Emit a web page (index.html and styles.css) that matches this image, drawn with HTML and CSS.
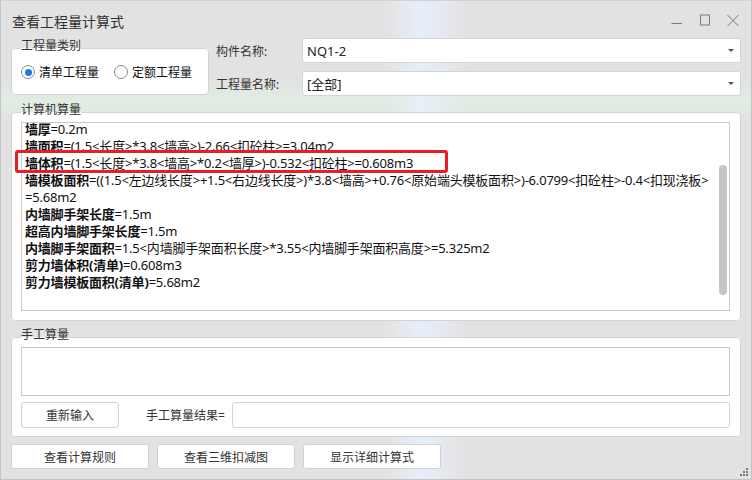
FILE: index.html
```html
<!DOCTYPE html>
<html lang="zh-CN">
<head>
  <meta charset="UTF-8">
  <title>查看工程量计算式</title>
  <link rel="stylesheet" href="styles.css">
</head>
<body>
  <div class="window">
    <div class="titlebar">
      <span class="title">查看工程量计算式</span>
      <div class="controls">
        <span class="ctl">
          <svg width="12" height="12" viewBox="0 0 12 12"><line x1="0.5" y1="9.5" x2="11" y2="9.5" stroke="#7a7a7a" stroke-width="1"/></svg>
        </span>
        <span class="ctl">
          <svg width="12" height="12" viewBox="0 0 12 12"><rect x="1.5" y="1" width="9" height="10" fill="none" stroke="#7a7a7a" stroke-width="1"/></svg>
        </span>
        <span class="ctl">
          <svg width="12" height="12" viewBox="0 0 12 12"><path d="M0.5 1 L11.5 12 M11.5 1 L0.5 12" stroke="#7a7a7a" stroke-width="1" fill="none"/></svg>
        </span>
      </div>
    </div>

    <div class="top">
      <fieldset class="group type-group">
        <legend>工程量类别</legend>
        <div class="radios">
          <label class="radio-item"><span class="radio checked"></span>清单工程量</label>
          <label class="radio-item"><span class="radio"></span>定额工程量</label>
        </div>
      </fieldset>

      <div class="fields">
        <div class="field-row">
          <span class="field-label">构件名称:</span>
          <div class="combo"><span>NQ1-2</span><span class="arrow"></span></div>
        </div>
        <div class="field-row">
          <span class="field-label">工程量名称:</span>
          <div class="combo"><span>[全部]</span><span class="arrow"></span></div>
        </div>
      </div>
    </div>

    <fieldset class="group calc-group">
      <legend>计算机算量</legend>
      <div class="calc-box">
        <div class="calc-lines">
          <div class="line"><b>墙厚</b>=0.2m</div>
          <div class="line"><b>墙面积</b>=(1.5&lt;长度&gt;*3.8&lt;墙高&gt;)-2.66&lt;扣砼柱&gt;=3.04m2</div>
          <div class="line hl"><b>墙体积</b>=(1.5&lt;长度&gt;*3.8&lt;墙高&gt;*0.2&lt;墙厚&gt;)-0.532&lt;扣砼柱&gt;=0.608m3</div>
          <div class="line"><b>墙模板面积</b>=((1.5&lt;左边线长度&gt;+1.5&lt;右边线长度&gt;)*3.8&lt;墙高&gt;+0.76&lt;原始端头模板面积&gt;)-6.0799&lt;扣砼柱&gt;-0.4&lt;扣现浇板&gt;<br>=5.68m2</div>
          <div class="line"><b>内墙脚手架长度</b>=1.5m</div>
          <div class="line"><b>超高内墙脚手架长度</b>=1.5m</div>
          <div class="line"><b>内墙脚手架面积</b>=1.5&lt;内墙脚手架面积长度&gt;*3.55&lt;内墙脚手架面积高度&gt;=5.325m2</div>
          <div class="line"><b>剪力墙体积(清单)</b>=0.608m3</div>
          <div class="line"><b>剪力墙模板面积(清单)</b>=5.68m2</div>
        </div>
        <div class="scroll-track"><div class="scroll-thumb"></div></div>
      </div>
    </fieldset>

    <fieldset class="group manual-group">
      <legend>手工算量</legend>
      <div class="manual-input"></div>
      <div class="manual-row">
        <button class="btn reset-btn">重新输入</button>
        <span class="result-label">手工算量结果=</span>
        <div class="result-box"></div>
      </div>
    </fieldset>

    <div class="bottom-bar">
      <button class="btn bottom-btn">查看计算规则</button>
      <button class="btn bottom-btn">查看三维扣减图</button>
      <button class="btn bottom-btn">显示详细计算式</button>
      <svg class="grip" width="9" height="9" viewBox="0 0 9 9">
        <rect x="6" y="0" width="2" height="2" fill="#7a7a7a"/>
        <rect x="3" y="3" width="2" height="2" fill="#7a7a7a"/>
        <rect x="6" y="3" width="2" height="2" fill="#7a7a7a"/>
        <rect x="0" y="6" width="2" height="2" fill="#7a7a7a"/>
        <rect x="3" y="6" width="2" height="2" fill="#7a7a7a"/>
        <rect x="6" y="6" width="2" height="2" fill="#7a7a7a"/>
      </svg>
    </div>
  </div>
</body>
</html>
```

FILE: styles.css
```css
* {
  margin: 0;
  padding: 0;
  box-sizing: border-box;
}

body {
  font-family: "Noto Sans", "Noto Sans CJK SC", sans-serif;
  font-size: 12px;
  color: #222;
  background: #fff;
}

/* dialog window */
.window {
  width: 752px;
  height: 480px;
  display: flex;
  flex-direction: column;
  border: 1px solid #c4c4c4;
  border-top-color: #d2d2d2;
  background-color: #e2e2e2;
  background-image:
    linear-gradient(90deg, rgba(226, 226, 226, 0) 385px, rgba(232, 240, 252, 0.9) 420px, rgba(226, 226, 226, 0) 465px),
    linear-gradient(180deg, rgba(226, 226, 226, 0) 80px, rgba(224, 240, 226, 0.8) 100px, rgba(226, 226, 226, 0) 120px);
}

.titlebar {
  height: 37px;
  padding: 3px 0 0 11px;
  display: flex;
  align-items: center;
}

.title {
  font-size: 14px;
  color: #333;
}

.controls {
  margin-left: auto;
  margin-top: -3px;
  padding-right: 4px;
  display: flex;
}

.ctl {
  width: 28px;
  height: 16px;
  display: flex;
  align-items: center;
  justify-content: center;
}

/* group boxes */
.group {
  border: 1px solid #d3d3d3;
  border-radius: 4px;
  background: #fff;
  min-width: 0;
}

.group legend {
  margin-left: 0;
  padding: 0 0 5px 0;
  font-size: 12px;
  line-height: 14px;
  color: #333;
}

.top {
  display: flex;
  padding: 0 10px;
}

.type-group {
  width: 198px;
  margin-top: 1px;
  padding: 6px 0 14px 9px;
  align-self: flex-start;
}

.radios {
  display: flex;
  gap: 15px;
  height: 16px;
  align-items: center;
}

.radio-item {
  display: flex;
  align-items: center;
  gap: 4px;
  color: #111;
}

.radio {
  width: 14px;
  height: 14px;
  border: 1px solid #8c8c8c;
  border-radius: 50%;
  display: flex;
  align-items: center;
  justify-content: center;
}

.radio.checked {
  border-color: #7c8ea6;
}

.radio.checked::after {
  content: "";
  width: 7px;
  height: 7px;
  border-radius: 50%;
  background: #1f78e0;
}

.fields {
  margin-left: 7px;
  display: flex;
  flex-direction: column;
  gap: 8px;
}

.field-row {
  display: flex;
  align-items: center;
}

.field-label {
  width: 86px;
  color: #333;
}

.combo {
  width: 439px;
  height: 25px;
  border: 1px solid #d4d4d4;
  border-radius: 3px;
  background: #fff;
  display: flex;
  align-items: center;
  padding: 0 6px 0 4px;
  font-size: 13px;
  color: #222;
}

.arrow {
  margin-left: auto;
  width: 0;
  height: 0;
  border-left: 3px solid transparent;
  border-right: 3px solid transparent;
  border-top: 3px solid #555;
}

/* computer calculation */
.calc-group {
  margin: 7px 10px 0;
  padding: 0 10px 9px 9px;
}

.calc-box {
  height: 189px;
  border: 1px solid #c9c9c9;
  display: flex;
}

.calc-lines {
  flex: 1;
  margin-top: -2px;
  padding-left: 3px;
  font-size: 13px;
  line-height: 17px;
  letter-spacing: -0.2px;
  color: #111;
  white-space: nowrap;
}

.calc-lines b {
  font-weight: 700;
}

.hl {
  position: relative;
}

.hl::after {
  content: "";
  box-sizing: border-box;
  position: absolute;
  left: -10px;
  top: -5px;
  width: 433px;
  height: 23px;
  border: 3px solid #ec1c24;
  border-radius: 3px;
}

.scroll-track {
  width: 8px;
  margin: 42px 2px 0 0;
}

.scroll-thumb {
  height: 130px;
  border-radius: 4px;
  background: #c6c6c6;
}

/* manual calculation */
.manual-group {
  margin: 7px 10px 0;
  padding: 0 10px 8px 9px;
}

.manual-input {
  height: 49px;
  border: 1px solid #c9c9c9;
}

.manual-row {
  margin-top: 6px;
  display: flex;
  align-items: center;
}

.btn {
  font-family: inherit;
  font-size: 12px;
  color: #333;
  background: #fff;
  border: 1px solid #d2d2d2;
  border-radius: 3px;
}

.reset-btn {
  width: 98px;
  height: 26px;
}

.result-label {
  margin-left: 27px;
  color: #333;
}

.result-box {
  margin-left: 7px;
  flex: 1;
  height: 26px;
  border: 1px solid #d2d2d2;
  border-radius: 3px;
}

.bottom-bar {
  margin-top: 7px;
  padding: 0 2px 0 10px;
  display: flex;
  gap: 8px;
  flex: 1;
}

.bottom-btn {
  width: 138px;
  height: 25px;
}

.grip {
  margin-left: auto;
  align-self: flex-end;
  margin-bottom: 2px;
}
```
